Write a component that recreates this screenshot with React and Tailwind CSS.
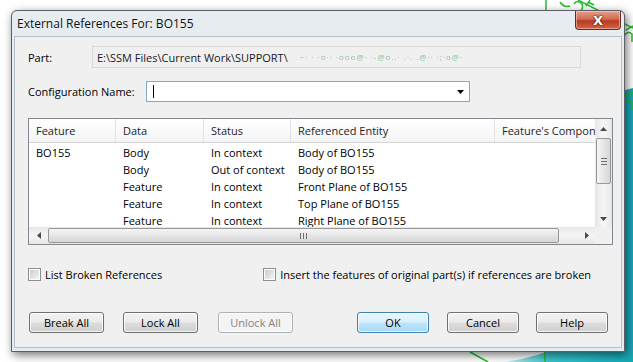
import React from "react";

const columns = [
  { label: "Feature", w: "w-[86px]" },
  { label: "Data", w: "w-[88px]" },
  { label: "Status", w: "w-[87px]" },
  { label: "Referenced Entity", w: "w-[204px]" },
  { label: "Feature's Compon", w: "w-[101px]" },
];

const rows = [
  ["BO155", "Body", "In context", "Body of BO155"],
  ["", "Body", "Out of context", "Body of BO155"],
  ["", "Feature", "In context", "Front Plane of BO155"],
  ["", "Feature", "In context", "Top Plane of BO155"],
  ["", "Feature", "In context", "Right Plane of BO155"],
];

function Backdrop() {
  return (
    <svg className="absolute inset-0" width="633" height="362" viewBox="0 0 633 362">
      <defs>
        <linearGradient id="teal" x1="0" y1="0" x2="1" y2="0">
          <stop offset="0" stopColor="#bff0f2" />
          <stop offset="0.35" stopColor="#39c3cc" />
          <stop offset="1" stopColor="#14a9b6" />
        </linearGradient>
      </defs>
      <path d="M618 92 L633 88 L633 362 L505 362 Q570 352 600 318 Q620 290 620 200 Z" fill="url(#teal)" />
      <g stroke="#22c02a" strokeWidth="1.5" fill="none">
        <path d="M578 0 L633 28" />
        <path d="M546 0 L546 12" />
        <path d="M560 2 q4 6 10 4 M574 4 q3 -5 8 0 q2 6 -3 7 M586 6 l4 -6 M588 2 l6 3" />
        <path d="M624 36 q4 -6 8 -2 l0 8 M626 30 l7 -4" />
        <path d="M624 104 q4 -6 8 -2 l0 8 M622 98 l11 -6" />
        <path d="M470 352 L488 362" />
        <path d="M545 352 L545 362" />
      </g>
    </svg>
  );
}

function Arrow({ dir }) {
  const pts = {
    up: "0,4 3.5,0 7,4",
    down: "0,0 3.5,4 7,0",
    left: "4,0 0,3.5 4,7",
    right: "0,0 4,3.5 0,7",
  }[dir];
  const size = dir === "up" || dir === "down" ? { w: 7, h: 4 } : { w: 4, h: 7 };
  return (
    <svg width={size.w} height={size.h} viewBox={`0 0 ${size.w} ${size.h}`}>
      <polygon points={pts} fill="#4a4a4a" />
    </svg>
  );
}

function Checkbox() {
  return (
    <span className="flex h-[13px] w-[13px] shrink-0 items-center justify-center border border-[#8e8f8f] bg-white">
      <span className="h-[9px] w-[9px] bg-[linear-gradient(135deg,#c9ccd1,#f4f4f4)]" />
    </span>
  );
}

function Button({ children, kind = "normal", className = "" }) {
  const styles = {
    normal:
      "border-[#707070] bg-[linear-gradient(to_bottom,#f2f2f2_0%,#ebebeb_48%,#dddddd_52%,#cfcfcf_100%)] text-black",
    default:
      "border-[#3c7fb1] bg-[linear-gradient(to_bottom,#eaf6fd_0%,#d9f0fc_48%,#bee6fd_52%,#a7d9f5_100%)] text-black",
    disabled: "border-[#adb2b5] bg-[#f4f4f4] text-[#838383]",
  }[kind];
  return (
    <div
      className={`flex h-[21px] items-center justify-center rounded-[3px] border shadow-[inset_0_0_0_1px_rgba(255,255,255,0.8)] ${styles} ${className}`}
    >
      {children}
    </div>
  );
}

export default function App() {
  return (
    <div className="relative h-[362px] w-[633px] overflow-hidden bg-white font-['Open_Sans',sans-serif] text-[11px] leading-none text-black">
      <Backdrop />
      <div className="relative pl-[11px] pt-[10px]">
        <div className="flex h-[342px] w-[614px] flex-col rounded-t-[6px] border border-[#5c6066] bg-[#e7ecf1] shadow-[2px_3px_10px_rgba(0,0,0,0.55)]">
          {/* title bar */}
          <div className="flex h-[25px] justify-between pr-[3px]">
            <div className="flex items-center pl-[5px] pt-[1px] text-[12px] text-[#111]">
              External References For: BO155
            </div>
            <div className="flex h-[19px] w-[46px] items-center justify-center rounded-b-[4px] border border-t-0 border-[#6b2a20] bg-[linear-gradient(to_bottom,#e5a08f_0%,#d36a52_45%,#b93a20_55%,#d0654a_100%)] shadow-[inset_0_0_0_1px_rgba(255,220,210,0.5)]">
              <span className="font-['DejaVu_Sans',sans-serif] text-[13px] font-bold text-white [text-shadow:0_0_2px_#3a1208,0_0_1px_#3a1208]">
                X
              </span>
            </div>
          </div>

          {/* client area */}
          <div className="mx-[2px] flex h-[312px] flex-col border border-[#b8c0c9] bg-[#f0f0f0]">
            {/* part */}
            <div className="mt-[9px] flex h-[22px] items-center pl-[13px]">
              <span className="w-[64px]">Part:</span>
              <div className="flex h-[22px] w-[489px] items-center gap-[12px] border border-[#dadada] bg-[#f0f0f0] pl-[4px] text-[#1a1a1a]">
                <span>E:\SSM Files\Current Work\SUPPORT\</span>
                <span className="text-[8px] tracking-[1px] text-[#8dc39a] blur-[0.4px]">
                  ~· ·   ·o··  ·ooo@· ·-@o..·  .·.  .@··      ·;·o@·
                </span>
              </div>
            </div>

            {/* configuration */}
            <div className="mt-[13px] flex h-[21px] items-center pl-[13px]">
              <span className="w-[118px]">Configuration Name:</span>
              <div className="flex h-[21px] w-[324px] items-center justify-between border border-[#84a9d0] bg-white pl-[6px] pr-[5px]">
                <span className="h-[13px] w-px bg-black" />
                <svg width="7" height="4" viewBox="0 0 7 4">
                  <polygon points="0,0 3.5,4 7,0" fill="#000" />
                </svg>
              </div>
            </div>

            {/* list */}
            <div className="ml-[13px] mt-[16px] flex h-[127px] w-[585px] flex-col border border-[#828790] bg-white">
              <div className="flex h-[108px]">
                <div className="w-[566px] overflow-hidden">
                  <div className="flex h-[24px] border-b border-[#d5d5d5] bg-[linear-gradient(to_bottom,#ffffff,#f3f4f6)]">
                    {columns.map((c, i) => (
                      <div
                        key={c.label}
                        className={`flex shrink-0 items-center overflow-hidden whitespace-nowrap pl-[7px] text-[#1e1e1e] ${c.w} ${
                          i > 0 ? "border-l border-[#e2e3e5]" : ""
                        }`}
                      >
                        {c.label}
                      </div>
                    ))}
                  </div>
                  <div className="pt-[1px]">
                    {rows.map((r, ri) => (
                      <div key={ri} className="flex h-[17px] items-center">
                        {r.map((cell, ci) => (
                          <div
                            key={ci}
                            className={`shrink-0 whitespace-nowrap ${columns[ci].w} ${ci === 0 ? "pl-[7px]" : "pl-[8px]"}`}
                          >
                            {cell}
                          </div>
                        ))}
                      </div>
                    ))}
                  </div>
                </div>
                {/* vertical scrollbar */}
                <div className="flex w-[17px] flex-col bg-[linear-gradient(to_right,#e6e6e6,#f4f4f4_40%,#f4f4f4_60%,#e6e6e6)]">
                  <div className="flex h-[17px] items-center justify-center pt-[2px]">
                    <Arrow dir="up" />
                  </div>
                  <div className="flex-1 px-[1px] pt-[2px]">
                    <div className="flex h-[46px] flex-col items-center justify-center gap-[2px] rounded-[2px] border border-[#979797] bg-[linear-gradient(to_right,#f5f5f5,#e6e6e6_50%,#d6d6d6)]">
                      <span className="h-px w-[6px] bg-[#6f6f6f]" />
                      <span className="h-px w-[6px] bg-[#6f6f6f]" />
                      <span className="h-px w-[6px] bg-[#6f6f6f]" />
                    </div>
                  </div>
                  <div className="flex h-[17px] items-center justify-center">
                    <Arrow dir="down" />
                  </div>
                </div>
              </div>
              <div className="flex h-[17px]">
                {/* horizontal scrollbar */}
                <div className="flex w-[566px] bg-[linear-gradient(to_bottom,#e6e6e6,#f4f4f4_40%,#f4f4f4_60%,#e6e6e6)]">
                  <div className="flex w-[17px] items-center justify-center pl-[2px]">
                    <Arrow dir="left" />
                  </div>
                  <div className="flex-1 py-[1px] pl-[2px]">
                    <div className="flex h-[15px] w-[511px] items-center justify-center gap-[2px] rounded-[2px] border border-[#979797] bg-[linear-gradient(to_bottom,#f5f5f5,#e6e6e6_50%,#d6d6d6)]">
                      <span className="h-[6px] w-px bg-[#6f6f6f]" />
                      <span className="h-[6px] w-px bg-[#6f6f6f]" />
                      <span className="h-[6px] w-px bg-[#6f6f6f]" />
                    </div>
                  </div>
                  <div className="flex w-[17px] items-center justify-center">
                    <Arrow dir="right" />
                  </div>
                </div>
                <div className="w-[17px] bg-[#f0f0f0]" />
              </div>
            </div>

            {/* options */}
            <div className="mt-[21px] flex h-[16px] items-center">
              <div className="ml-[13px] flex items-center gap-[4px]">
                <Checkbox />
                <span>List Broken References</span>
              </div>
              <div className="ml-[101px] flex items-center gap-[4px]">
                <Checkbox />
                <span>Insert the features of original part(s) if references are broken</span>
              </div>
            </div>

            {/* buttons */}
            <div className="mt-[30px] flex">
              <Button className="ml-[14px] w-[75px]">Break All</Button>
              <Button className="ml-[19px] w-[75px]">Lock All</Button>
              <Button kind="disabled" className="ml-[20px] w-[75px]">
                Unlock All
              </Button>
              <Button kind="default" className="ml-[64px] w-[72px]">
                OK
              </Button>
              <Button className="ml-[18px] w-[72px]">Cancel</Button>
              <Button className="ml-[17px] w-[72px]">Help</Button>
            </div>
          </div>
        </div>
      </div>
    </div>
  );
}
